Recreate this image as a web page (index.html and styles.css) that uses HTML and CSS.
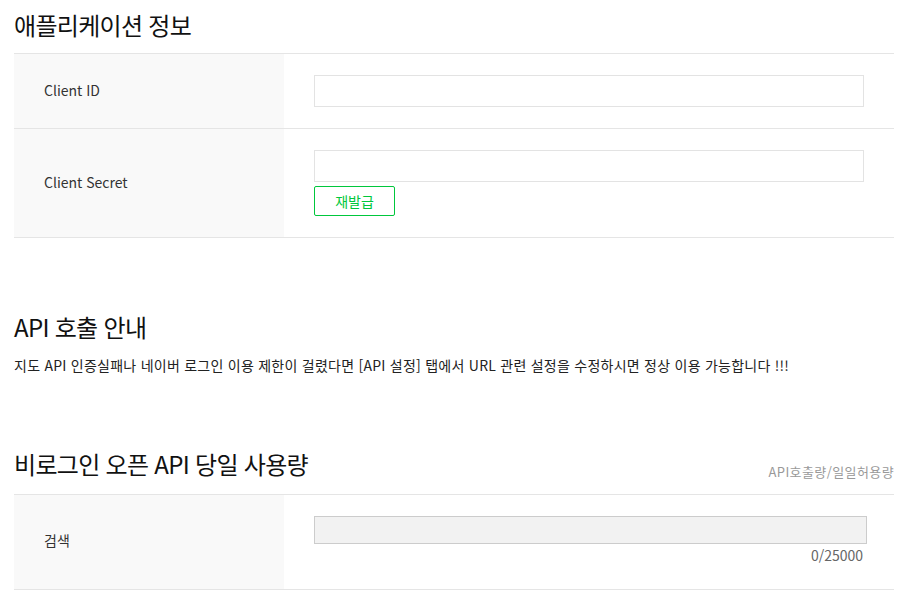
FILE: index.html
```html
<!DOCTYPE html>
<html lang="ko">
<head>
<meta charset="utf-8">
<link rel="stylesheet" href="styles.css">
</head>
<body>
<div class="page">
  <section class="sec">
    <div class="sec-head">
      <h2 class="title">애플리케이션 정보</h2>
    </div>
    <table class="tbl">
      <tr class="row-id">
        <th class="label">Client ID</th>
        <td class="value"><input class="field" type="text"></td>
      </tr>
      <tr class="row-secret">
        <th class="label">Client Secret</th>
        <td class="value">
          <input class="field" type="text">
          <button class="btn-green" type="button">재발급</button>
        </td>
      </tr>
    </table>
  </section>

  <section class="sec sec-notice">
    <h2 class="title">API 호출 안내</h2>
    <p class="notice">지도 API 인증실패나 네이버 로그인 이용 제한이 걸렸다면 [API 설정] 탭에서 URL 관련 설정을 수정하시면 정상 이용 가능합니다 !!!</p>
  </section>

  <section class="sec sec-usage">
    <div class="sec-head">
      <h2 class="title">비로그인 오픈 API 당일 사용량</h2>
      <span class="aside">API호출량/일일허용량</span>
    </div>
    <table class="tbl">
      <tr class="row-usage">
        <th class="label">검색</th>
        <td class="value">
          <div class="bar"><div class="bar-fill" style="width:0%"></div></div>
          <div class="count">0/25000</div>
        </td>
      </tr>
    </table>
  </section>
</div>
</body>
</html>
```

FILE: styles.css
```css
* { box-sizing: border-box; }
html, body { margin: 0; padding: 0; background: #fff; }
body {
  font-family: "Noto Sans CJK KR", "Noto Sans", sans-serif;
  color: #333;
}
.page {
  width: 880px;
  margin-left: 14px;
}
.sec-head {
  display: flex;
  align-items: flex-end;
  justify-content: space-between;
  height: 53px;
}
.title {
  margin: 0 0 8px;
  font-size: 24px;
  font-weight: 400;
  line-height: 41px;
  color: #111;
  letter-spacing: -0.7px;
}
.aside {
  font-size: 13px;
  color: #999;
  line-height: 20px;
  padding-bottom: 12px;
  letter-spacing: 0.4px;
}
.tbl {
  width: 100%;
  border-collapse: collapse;
  border-top: 1px solid #e5e5e5;
}
.tbl tr { border-bottom: 1px solid #e5e5e5; }
.label {
  width: 270px;
  background: #f9f9f9;
  text-align: left;
  font-weight: 400;
  font-size: 14px;
  color: #333;
  padding: 0 0 2px 30px;
  vertical-align: middle;
}
.value {
  padding: 21px 0 21px 30px;
  vertical-align: top;
}
.field {
  display: block;
  width: 550px;
  height: 32px;
  border: 1px solid #e3e3e3;
  background: #fff;
  margin: 0;
  padding: 0 8px;
  outline: none;
}
.btn-green {
  display: block;
  margin-top: 4px;
  width: 81px;
  height: 30px;
  border: 1px solid #00c73c;
  border-radius: 2px;
  background: #fff;
  color: #00c73c;
  font-family: "Noto Sans CJK KR", sans-serif;
  font-size: 14px;
  padding: 0;
}
.sec-notice { margin-top: 68px; }
.sec-notice .title { margin-bottom: 6px; }
.notice {
  margin: 0;
  font-size: 14px;
  line-height: 24px;
  color: #222;
  letter-spacing: 0.25px;
}
.sec-usage { margin-top: 64px; }
.sec-usage .title { margin-bottom: 10px; }
.row-usage .label { padding-bottom: 4px; }
.row-usage .value { padding-bottom: 24px; }
.bar {
  width: 553px;
  height: 28px;
  border: 1px solid #ccc;
  background: #f2f2f2;
}
.bar-fill { height: 100%; background: #00c73c; }
.count {
  width: 549px;
  text-align: right;
  font-size: 14px;
  line-height: 20px;
  color: #666;
  margin-top: 1px;
}
```
